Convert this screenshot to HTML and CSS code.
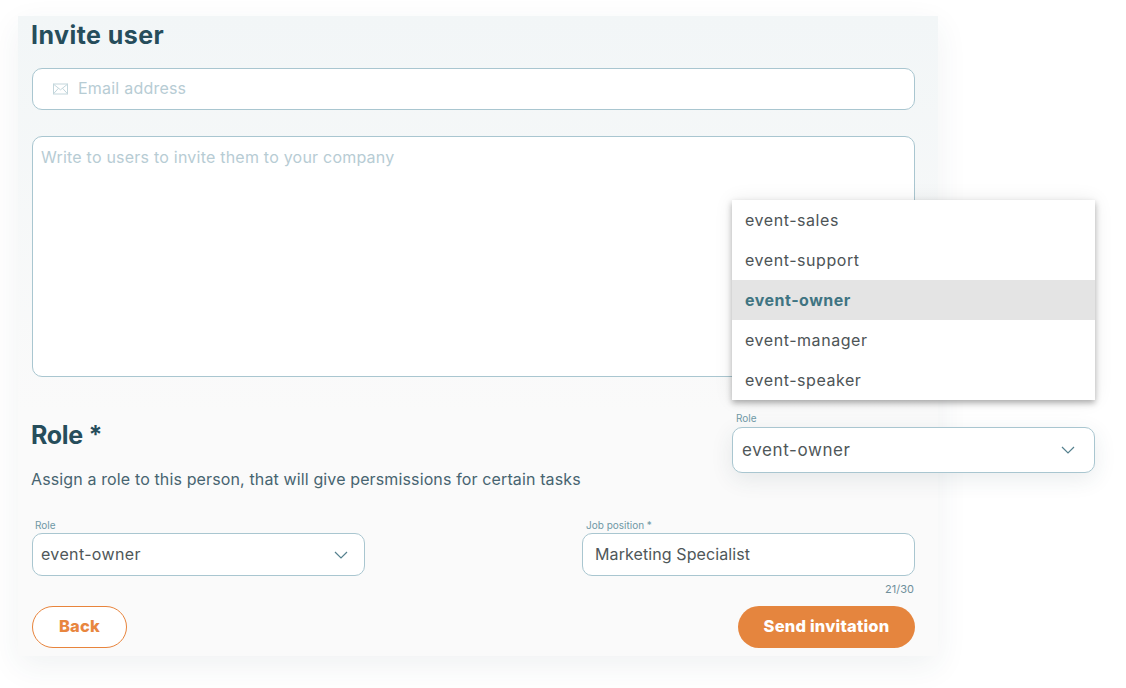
FILE: index.html
```html
<!DOCTYPE html>
<html lang="en">
<head>
<meta charset="utf-8">
<title>Invite user</title>
<link rel="stylesheet" href="styles.css">
</head>
<body>
<main class="card">
  <h1 class="heading invite-heading">Invite user</h1>
  <div class="field email-field">
    <svg class="mail-icon" width="15" height="12" viewBox="0 0 15 12" fill="none" stroke="#c3d6dc" stroke-width="1"><rect x="0.5" y="1" width="14" height="10"/><path d="M0.5 1.2 7.5 6.8 14.5 1.2M0.5 10.8 5.5 5.2M14.5 10.8 9.5 5.2"/></svg>
    <span class="placeholder">Email address</span>
  </div>
  <div class="field message-field"><span class="placeholder">Write to users to invite them to your company</span></div>
  <h2 class="heading role-heading">Role *</h2>
  <p class="description">Assign a role to this person, that will give persmissions for certain tasks</p>
  <div class="form-row">
    <div class="form-col">
      <div class="mini-label role-label">Role</div>
      <div class="field select-field">
        <span class="value select-value">event-owner</span>
        <svg class="chevron" width="14" height="8" viewBox="0 0 14 8" fill="none" stroke="#55808e" stroke-width="1.2"><path d="M1 1 7 7 13 1"/></svg>
      </div>
    </div>
    <div class="form-col">
      <div class="mini-label job-label">Job position *</div>
      <div class="field job-field"><span class="value">Marketing Specialist</span></div>
      <div class="counter">21/30</div>
    </div>
  </div>
  <div class="actions">
    <button class="btn btn-back">Back</button>
    <button class="btn btn-send">Send invitation</button>
  </div>
</main>

<div class="popover">
  <ul class="menu">
    <li class="menu-item">event-sales</li>
    <li class="menu-item">event-support</li>
    <li class="menu-item selected">event-owner</li>
    <li class="menu-item">event-manager</li>
    <li class="menu-item">event-speaker</li>
  </ul>
  <div class="mini-label pop-label">Role</div>
  <div class="field pop-select">
    <span class="value pop-value">event-owner</span>
    <svg class="chevron" width="14" height="8" viewBox="0 0 14 8" fill="none" stroke="#55808e" stroke-width="1.2"><path d="M1 1 7 7 13 1"/></svg>
  </div>
</div>
</body>
</html>
```
FILE: styles.css
```css
* { box-sizing: border-box; }
html, body { margin: 0; height: 100%; background: #fff; overflow: hidden; }
body { font-family: "Inter", "Liberation Sans", sans-serif; position: relative; }

.card {
  margin: 16px 0 0 18px;
  width: 920px;
  height: 640px;
  padding: 0 23px 0 14px;
  background: linear-gradient(180deg, #f2f6f7 0, #fafafa 62%);
  box-shadow: 0 10px 30px rgba(40, 70, 80, 0.07);
  display: flex;
  flex-direction: column;
}
.heading { margin: 0 0 0 -1px; color: #264d5b; font-size: 25px; line-height: 30px; font-weight: 700; }
.invite-heading { margin-top: 4px; letter-spacing: 0.45px; }

.field { background: #fff; border: 1px solid #a9c6d0; border-radius: 10px; }
.placeholder { color: #b7ccd4; font-size: 16px; letter-spacing: 0.22px; }
.value { color: #4f5759; font-size: 16px; letter-spacing: 0.1px; }
.select-value { letter-spacing: 0.35px; }
.pop-value { font-size: 17px; letter-spacing: 0.6px; }

.email-field { margin-top: 18px; height: 42px; display: flex; align-items: center; padding: 0 0 2px 20px; gap: 10px; }
.message-field { margin-top: 26px; height: 241px; padding: 10px 8px; }
.mail-icon { flex: none; margin-top: 2px; }

.role-heading { margin-top: 43px; letter-spacing: -0.3px; }
.description { margin: 19px 0 0 -1px; color: #476470; font-size: 16px; letter-spacing: 0.13px; line-height: 20px; }

.form-row { margin-top: 30px; display: flex; justify-content: space-between; }
.form-col { width: 333px; }
.mini-label { color: #6f98a5; font-size: 10px; line-height: 12px; }
.role-label { padding-left: 3px; }
.job-label { padding-left: 4px; }
.select-field { margin-top: 2px; height: 43px; display: flex; align-items: center; justify-content: space-between; padding: 0 16px 0 8px; }
.select-value { padding-bottom: 2px; }
.job-field { margin-top: 2px; height: 43px; display: flex; align-items: center; padding: 0 0 2px 12px; }
.counter { margin-top: 7px; padding-right: 1px; text-align: right; color: #6f8f9a; font-size: 11px; line-height: 12px; }

.actions { margin-top: 11px; display: flex; justify-content: space-between; }
.btn { height: 42px; border-radius: 21px; font-family: inherit; font-size: 16.5px; font-weight: 800; padding: 0 0 2px; letter-spacing: 0.2px; }
.btn-back { width: 95px; background: #fff; border: 1px solid #e8843c; color: #e8863f; }
.btn-send { width: 177px; background: #e5853e; border: 0; color: #fff; }

.popover { position: absolute; left: 732px; top: 200px; width: 363px; }
.menu { margin: 0; padding: 0; list-style: none; background: #fff; box-shadow: 0 3px 6px rgba(0, 0, 0, 0.3), 0 0 18px rgba(0, 0, 0, 0.08); height: 200px; }
.menu-item { height: 40px; line-height: 41px; padding-left: 13px; color: #4d5456; font-size: 16px; letter-spacing: 0.55px; }
.menu-item.selected { background: #e4e4e4; color: #3f7482; font-weight: 700; letter-spacing: 0.5px; }
.pop-label { margin-top: 12px; padding-left: 4px; }
.pop-select { margin-top: 3px; height: 46px; display: flex; align-items: center; justify-content: space-between; padding: 0 19px 0 9px; box-shadow: 0 6px 22px rgba(40, 70, 80, 0.1); }
```
